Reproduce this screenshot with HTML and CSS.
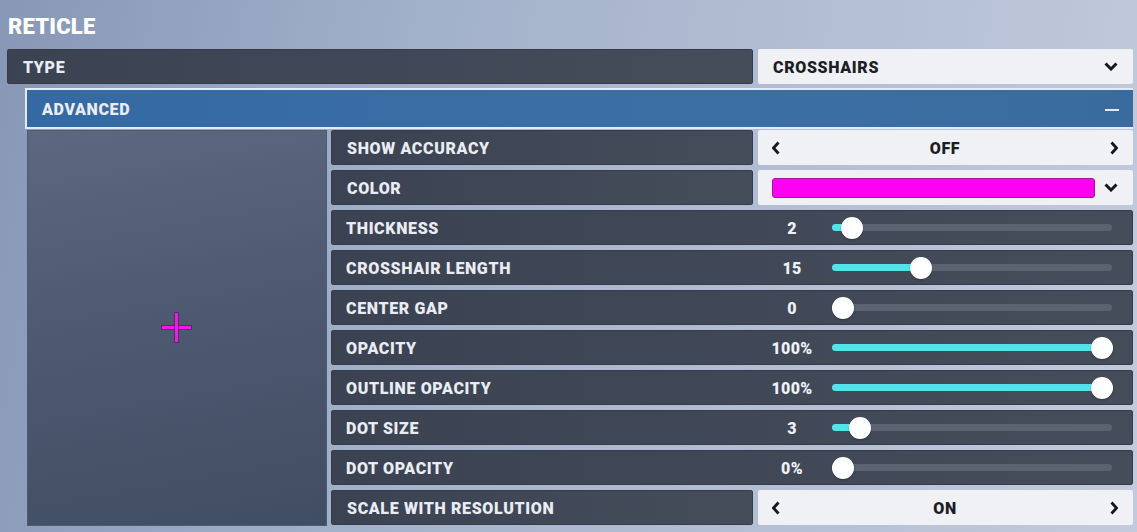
FILE: index.html
```html
<!DOCTYPE html>
<html lang="en">
<head>
    <meta charset="UTF-8">
    <title>Reticle</title>
    <link rel="stylesheet" href="styles.css">
</head>
<body>
    <main class="settings">
        <h1 class="settings-title">RETICLE</h1>

        <div class="row">
            <div class="row-label">TYPE</div>
            <div class="row-value dropdown">
                <span>CROSSHAIRS</span>
                <svg class="chevron-down" viewBox="0 0 14 9"><path d="M1.5 1.5 L7 7 L12.5 1.5"/></svg>
            </div>
        </div>

        <section class="advanced">
            <div class="advanced-head">
                <span>ADVANCED</span>
                <span class="collapse"></span>
            </div>
            <div class="advanced-body">
                <div class="preview">
                    <div class="crosshair"></div>
                </div>
                <div class="options">
                    <div class="row">
                        <div class="row-label">SHOW ACCURACY</div>
                        <div class="row-value toggle">
                            <svg class="arrow" viewBox="0 0 8 14"><path d="M6.5 1.5 L1.5 7 L6.5 12.5"/></svg>
                            <span>OFF</span>
                            <svg class="arrow" viewBox="0 0 8 14"><path d="M1.5 1.5 L6.5 7 L1.5 12.5"/></svg>
                        </div>
                    </div>
                    <div class="row">
                        <div class="row-label">COLOR</div>
                        <div class="row-value dropdown color-pick">
                            <span class="swatch"></span>
                            <svg class="chevron-down" viewBox="0 0 14 9"><path d="M1.5 1.5 L7 7 L12.5 1.5"/></svg>
                        </div>
                    </div>
                    <div class="row slider-row">
                        <div class="row-label">THICKNESS</div>
                        <div class="slider-num">2</div>
                        <div class="slider" style="--p: 0.035"><div class="slider-fill"></div><div class="slider-thumb"></div></div>
                    </div>
                    <div class="row slider-row">
                        <div class="row-label">CROSSHAIR LENGTH</div>
                        <div class="slider-num">15</div>
                        <div class="slider" style="--p: 0.3"><div class="slider-fill"></div><div class="slider-thumb"></div></div>
                    </div>
                    <div class="row slider-row">
                        <div class="row-label">CENTER GAP</div>
                        <div class="slider-num">0</div>
                        <div class="slider" style="--p: 0"><div class="slider-fill"></div><div class="slider-thumb"></div></div>
                    </div>
                    <div class="row slider-row">
                        <div class="row-label">OPACITY</div>
                        <div class="slider-num">100%</div>
                        <div class="slider" style="--p: 1"><div class="slider-fill"></div><div class="slider-thumb"></div></div>
                    </div>
                    <div class="row slider-row">
                        <div class="row-label">OUTLINE OPACITY</div>
                        <div class="slider-num">100%</div>
                        <div class="slider" style="--p: 1"><div class="slider-fill"></div><div class="slider-thumb"></div></div>
                    </div>
                    <div class="row slider-row">
                        <div class="row-label">DOT SIZE</div>
                        <div class="slider-num">3</div>
                        <div class="slider" style="--p: 0.066"><div class="slider-fill"></div><div class="slider-thumb"></div></div>
                    </div>
                    <div class="row slider-row">
                        <div class="row-label">DOT OPACITY</div>
                        <div class="slider-num">0%</div>
                        <div class="slider" style="--p: 0"><div class="slider-fill"></div><div class="slider-thumb"></div></div>
                    </div>
                    <div class="row">
                        <div class="row-label">SCALE WITH RESOLUTION</div>
                        <div class="row-value toggle">
                            <svg class="arrow" viewBox="0 0 8 14"><path d="M6.5 1.5 L1.5 7 L6.5 12.5"/></svg>
                            <span>ON</span>
                            <svg class="arrow" viewBox="0 0 8 14"><path d="M1.5 1.5 L6.5 7 L1.5 12.5"/></svg>
                        </div>
                    </div>
                </div>
            </div>
        </section>
    </main>
</body>
</html>
```

FILE: styles.css
```css
* {
    margin: 0;
    padding: 0;
    box-sizing: border-box;
}
html, body {
    height: 100%;
}
body {
    font-family: Roboto, "Liberation Sans", sans-serif;
    font-weight: 900;
    color: #e9edf3;
    background: linear-gradient(100deg, #8797b6 0%, #a2b1ca 35%, #b4bfd4 70%, #c3cadc 100%);
    overflow: hidden;
}
.settings {
    padding: 13px 4px 0 7px;
}
.settings-title {
    font-size: 22px;
    font-weight: 900;
    line-height: 28px;
    letter-spacing: 0.2px;
    color: #fff;
    margin-left: 1px;
    margin-bottom: 8px;
}

/* rows */
.row {
    display: flex;
    gap: 5px;
    height: 35px;
}
.row-label {
    flex: 1;
    display: flex;
    align-items: center;
    padding: 2px 0 0 15px;
    font-size: 16px;
    letter-spacing: 0.65px;
    background: linear-gradient(90deg, #3b4251, #454c5a);
    border: 1px solid #353b48;
    border-radius: 2px;
}
.row-value {
    width: 375px;
    display: flex;
    align-items: center;
    background: #eff1f5;
    color: #1b1e25;
    font-size: 16px;
    letter-spacing: 0.65px;
    border-radius: 2px;
}
.row-value span {
    padding-top: 2px;
}
.dropdown {
    justify-content: space-between;
    padding: 0 15px 0 15px;
}
.chevron-down {
    width: 14px;
    height: 9px;
    fill: none;
    stroke: #15171c;
    stroke-width: 3;
}
.toggle {
    justify-content: space-between;
    padding: 0 15px 0 14px;
}
.arrow {
    width: 8px;
    height: 14px;
    fill: none;
    stroke: #15171c;
    stroke-width: 2.8;
}
.color-pick {
    padding-left: 14px;
    gap: 9px;
}
.color-pick .swatch {
    flex: 1;
    height: 20px;
    padding: 0;
    background: #ff00f2;
    border: 1px solid #a3159b;
    border-radius: 3px;
}

/* advanced block */
.advanced {
    margin: 4px 0 0 18px;
}
.advanced-head {
    height: 41px;
    display: flex;
    align-items: center;
    justify-content: space-between;
    padding: 2px 14px 0 15px;
    background: linear-gradient(90deg, #3569a3, #3c6fa4 60%, #3a6b9f);
    border: 2px solid #e3ecf6;
    border-right: none;
    font-size: 16px;
    letter-spacing: 0.65px;
}
.collapse {
    width: 14px;
    height: 2px;
    background: #dfeaf5;
}
.advanced-body {
    display: flex;
    gap: 4px;
    padding: 1px 0 0 2px;
}
.preview {
    width: 300px;
    height: 396px;
    display: flex;
    align-items: center;
    justify-content: center;
    background: linear-gradient(170deg, #5b6880 0%, #4d5a71 45%, #414d63 100%);
    border: 1px solid #4f5b70;
}
.options {
    flex: 1;
    display: flex;
    flex-direction: column;
    gap: 5px;
}
.options .row {
    height: 35px;
}

/* crosshair drawn in the preview */
.crosshair {
    position: relative;
    width: 29px;
    height: 29px;
    transform: translate(-1px, -1px);
}
.crosshair::before,
.crosshair::after {
    content: "";
    position: absolute;
    background: #f21ae6;
    box-shadow: 0 0 0 1px rgba(70, 20, 90, 0.55);
}
.crosshair::before {
    left: 0;
    top: 13px;
    width: 29px;
    height: 3px;
}
.crosshair::after {
    left: 13px;
    top: 0;
    width: 3px;
    height: 29px;
}

/* sliders */
.slider-row {
    gap: 0;
    background: linear-gradient(90deg, #3b4251, #454c5a);
    border: 1px solid #353b48;
    border-radius: 2px;
}
.slider-row .row-label {
    background: none;
    border: none;
    padding-left: 14px;
}
.slider-num {
    width: 60px;
    display: flex;
    align-items: center;
    justify-content: center;
    padding-top: 2px;
    font-size: 16px;
    letter-spacing: 0.3px;
    color: #eef1f6;
}
.slider {
    position: relative;
    width: 280px;
    height: 7px;
    margin: auto 20px auto 10px;
    border-radius: 4px;
    background: #5b6371;
}
.slider-fill {
    height: 100%;
    width: calc(11px + 259px * var(--p));
    border-radius: 4px;
    background: #4ee4ea;
}
.slider-thumb {
    position: absolute;
    top: 50%;
    left: calc(11px + 259px * var(--p));
    width: 22px;
    height: 22px;
    margin: -11px 0 0 -11px;
    border-radius: 50%;
    background: #fff;
    box-shadow: 0 1px 2px rgba(0, 0, 0, 0.25);
}
```
